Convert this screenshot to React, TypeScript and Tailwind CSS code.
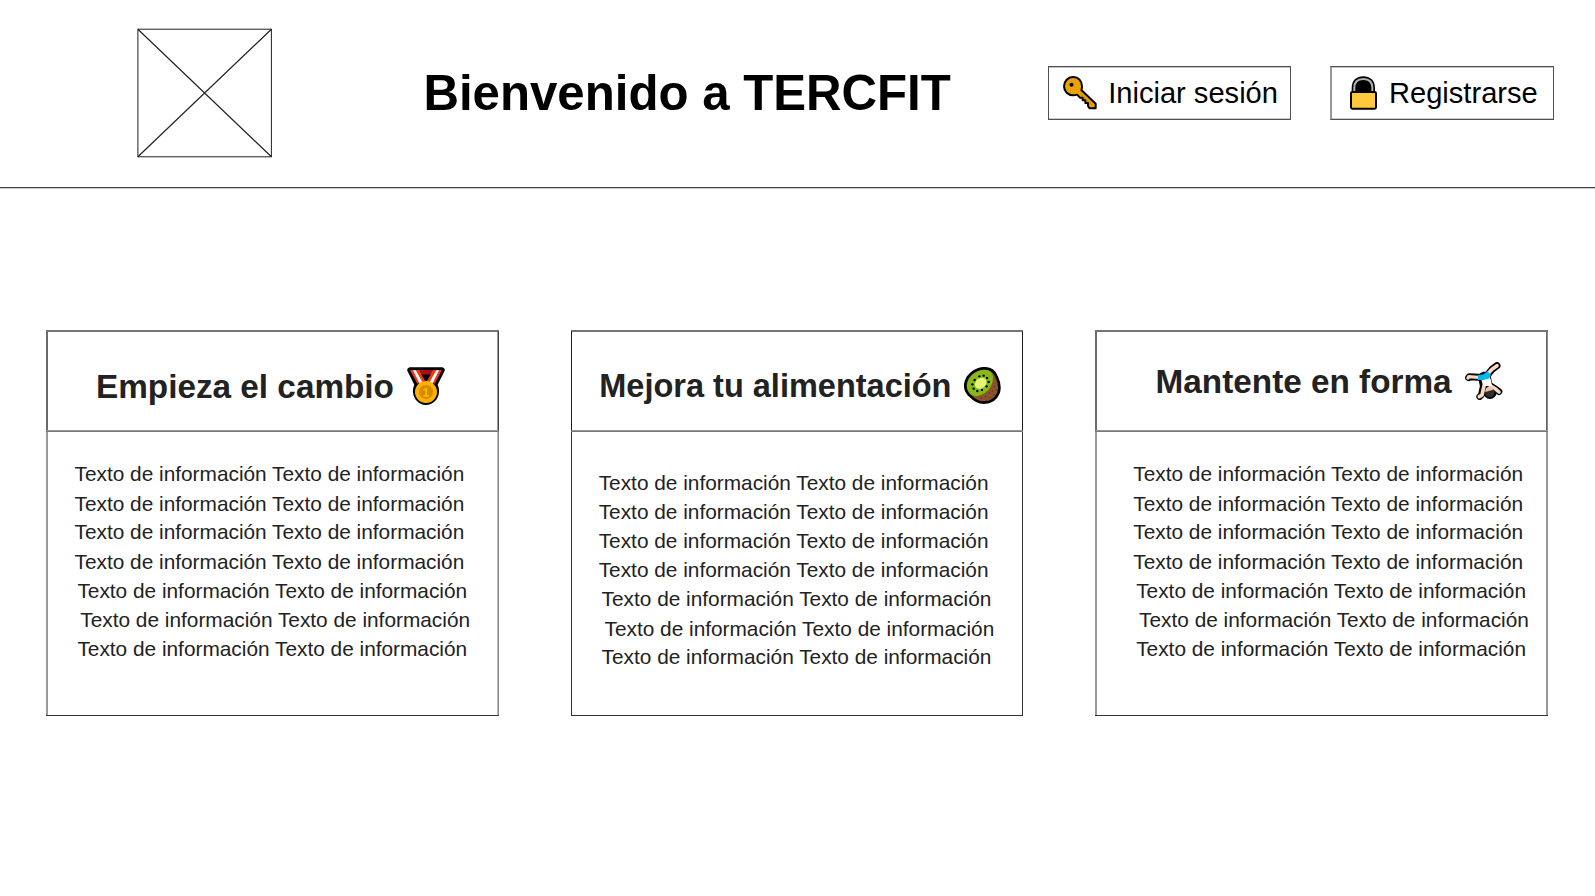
import type { ReactNode } from 'react';

const KeyIcon = () => (
  <svg viewBox="0 0 102 102" className="h-[34px] w-[34px] shrink-0">
    <path
      d="M31 3C15 3 3 16 3 31s12 27 28 27c4 0 8-1 11-2l9 9h8v8h8v8h8v9l5 7h18V83L55 42c2-3 2-7 2-11C57 15 46 3 31 3z"
      fill="#eaa300"
      stroke="#000"
      strokeWidth="6"
      strokeLinejoin="round"
    />
    <path d="M52 53l35 34" stroke="#c98200" strokeWidth="3" fill="none" />
    <circle cx="25.500" cy="26" r="6" fill="#000" />
  </svg>
);

const LockIcon = () => (
  <svg viewBox="0 0 81 102" className="h-[34px] w-[27px] shrink-0">
    <path d="M5 50V36C5 13 20 1 40 1s35 12 35 35v14z" fill="#000" />
    <path d="M13 48V36C13 18 24 9 40 9s27 9 27 27v12" fill="none" stroke="#b4b4b4" strokeWidth="6" />
    <rect x="3" y="48" width="75" height="50" rx="4" fill="#ffc83d" stroke="#000" strokeWidth="6" />
  </svg>
);

const MedalIcon = () => (
  <svg viewBox="0 0 114 114" className="h-[38px] w-[38px] shrink-0">
    <path d="M8 1h98q9 2 7 10L92 53q5 10 4 23C94 98 78 114 57 114S20 98 18 76q-1-13 4-23L1 11Q-1 3 8 1z" fill="#000" />
    <path d="M34 9h46l-9 14H44z" fill="#a80f1b" />
    <path d="M9 9h27l19 34-24 7z" fill="#f03a17" />
    <path d="M105 9H78L59 43l24 7z" fill="#f03a17" />
    <path d="M43 23h28L57 43z" fill="#000" />
    <path d="M18 10h8l20 35-8 5zM96 10h-8L68 45l8 5z" fill="#fff" />
    <circle cx="57" cy="75" r="33" fill="#ffb300" />
    <circle cx="57" cy="75" r="21" fill="#d38b00" />
    <path d="M49 67l7-4h4v21h6v5H49v-5h6V70l-6 2z" fill="#ffb300" />
  </svg>
);

const KiwiIcon = () => (
  <svg viewBox="0 0 111 111" className="h-[37px] w-[37px] shrink-0">
    <path
      d="M60 4C79 3 90 11 97 27c8 16 12 36 6 52-8 19-24 28-43 28-17 0-31-9-42-21C4 73 1 59 6 43 13 21 35 5 60 4z"
      fill="#8c5230"
      stroke="#000"
      strokeWidth="8"
    />
    <path d="M60 8c16-1 26 8 27 23 1 31-25 56-53 57C18 85 8 72 9 54 11 30 34 10 60 8z" fill="#86b817" />
    <ellipse cx="50" cy="49" rx="19" ry="15" transform="rotate(-42 50 49)" fill="#e3f475" />
    <g fill="#000">
      <circle cx="46" cy="28" r="3.600" />
      <circle cx="59" cy="26" r="3.600" />
      <circle cx="69" cy="33" r="3.600" />
      <circle cx="74" cy="45" r="3.600" />
      <circle cx="68" cy="58" r="3.600" />
      <circle cx="54" cy="69" r="3.600" />
      <circle cx="40" cy="72" r="3.600" />
      <circle cx="29" cy="65" r="3.600" />
      <circle cx="25" cy="52" r="3.600" />
      <circle cx="32" cy="39" r="3.600" />
    </g>
    <g fill="#5c321b">
      <circle cx="91" cy="59" r="2.200" />
      <circle cx="98" cy="69" r="2.200" />
      <circle cx="86" cy="72" r="2.200" />
      <circle cx="76" cy="79" r="2.200" />
      <circle cx="90" cy="83" r="2.200" />
      <circle cx="65" cy="89" r="2.200" />
      <circle cx="79" cy="92" r="2.200" />
      <circle cx="52" cy="94" r="2.200" />
      <circle cx="67" cy="100" r="2.200" />
    </g>
  </svg>
);

const CartwheelIcon = () => (
  <svg viewBox="0 0 114 114" className="h-[38px] w-[38px] shrink-0">
    <g fill="none" stroke="#000" strokeLinecap="round" strokeLinejoin="round">
      <path d="M11 47l2-3 28 2 24-4 16-20L96 11" strokeWidth="21" />
      <path d="M59 48l5 24" strokeWidth="38" />
      <path d="M55 72l-6 27-5 5" strokeWidth="20" />
      <path d="M74 70l18 11 10 8" strokeWidth="20" />
    </g>
    <circle cx="75" cy="91" r="20" fill="#000" />
    <g fill="none" stroke="#f9d8c8" strokeLinecap="round" strokeLinejoin="round">
      <path d="M9 48l2-4 30 2" strokeWidth="10" />
      <path d="M67 37l15-16 14-10" strokeWidth="11" />
      <path d="M57 72l-6 27-8 5" strokeWidth="11" />
      <path d="M76 71l17 11 9 8" strokeWidth="11" />
    </g>
    <path d="M48 48l24-7 6 14 3 17H54z" fill="#fff" />
    <path d="M39 40l17-3 11-10 11 12-7 11-17 4H39z" fill="#00b7f1" />
    <circle cx="74" cy="92" r="14" fill="#2f2f2f" />
    <path d="M61 90c-1-11 5-16 13-16 6 0 10 5 10 9z" fill="#eec3b1" />
  </svg>
);

const LINE = 'Texto de información Texto de información';
const INDENTS = ['pl-0', 'pl-0', 'pl-0', 'pl-0', 'pl-[2.9px]', 'pl-[5.8px]', 'pl-[2.9px]'];
const SIDE_ROWS = ['h-[30px]', 'h-[28px]', 'h-[30px]', 'h-[29px]', 'h-[29px]', 'h-[29px]', 'h-[29px]'];
const CENTER_ROWS = ['h-[29px]', 'h-[29px]', 'h-[29px]', 'h-[29px]', 'h-[30px]', 'h-[28px]', 'h-[29px]'];

interface CardProps {
  title: string;
  icon: ReactNode;
  frame: string;
  head: string;
  heading: string;
  iconOffset: string;
  body: string;
  rows: string[];
}

const Card = ({ title, icon, frame, head, heading, iconOffset, body, rows }: CardProps) => (
  <section className={`flex h-[386px] shrink-0 flex-col border-b border-b-[#333] ${frame}`}>
    <header className="border-y border-t-[#747474] border-b-[#777]">
      <div className={`flex h-[100px] items-start border-y border-t-[#747474] border-b-[#999] ${head}`}>
        <h2 className={`leading-[40px] font-bold whitespace-nowrap ${heading}`}>{title}</h2>
        <span className={iconOffset}>{icon}</span>
      </div>
    </header>
    <div className={`grow text-[20.83px] leading-[29px] whitespace-nowrap ${body}`}>
      {rows.map((row, i) => (
        <p key={i} className={`${row} ${INDENTS[i]}`}>
          {LINE}
        </p>
      ))}
    </div>
  </section>
);

export default function App() {
  return (
    <div className="h-[896px] w-[1595px] overflow-hidden bg-white font-['Liberation_Sans',Arial,sans-serif] text-[#222]">
      <header className="flex h-[188px] items-center border-b border-[#444] pb-px text-black shadow-[0_1px_#ccc]">
        <svg viewBox="0 0 136 130" className="ml-[137px] h-[130px] w-[136px] shrink-0" fill="none" stroke="#222">
          <rect x="0.900" y="1.200" width="133.500" height="127.600" strokeWidth="1" />
          <path d="M0.900 1.200L134.400 128.800M134.400 1.200L0.900 128.800" strokeWidth="1.200" />
        </svg>
        <h1 className="ml-[150.400px] w-[624.600px] shrink-0 text-[49.2px] leading-[56px] font-bold whitespace-nowrap">
          Bienvenido a TERCFIT
        </h1>
        <button className="flex h-[54px] w-[243px] shrink-0 items-center border border-[#505050] pl-[14px] text-[29.1px] leading-[34px] whitespace-nowrap shadow-[inset_0_1px_#c4c4c4,inset_0_-1px_#ccc]">
          <KeyIcon />
          <span className="ml-[11.200px]">Iniciar sesión</span>
        </button>
        <button className="ml-[39px] flex h-[54px] w-[224px] shrink-0 items-center border border-[#505050] border-l-[#999] pl-[19px] text-[29.1px] leading-[34px] whitespace-nowrap shadow-[inset_1px_0_#999,inset_0_1px_#c4c4c4,inset_0_-1px_#ccc]">
          <LockIcon />
          <span className="ml-[12px]">Registrarse</span>
        </button>
      </header>

      <main className="flex gap-[72px] pt-[142px] pl-[46px]">
        <Card
          title="Empieza el cambio"
          icon={<MedalIcon />}
          frame="w-[453px]"
          head="border-x border-l-[#6a6a6a] border-r-[#444] shadow-[inset_1px_0_#6a6a6a,inset_-1px_0_#999] pl-[49px]"
          heading="mt-[35px] w-[311px] text-[33.3px]"
          iconOffset="mt-[35px]"
          body="border-x border-l-[#999] border-r-[#888] shadow-[inset_1px_0_#999,inset_-1px_0_#bbb] pt-[27px] pl-[27.500px]"
          rows={SIDE_ROWS}
        />
        <Card
          title="Mejora tu alimentación"
          icon={<KiwiIcon />}
          frame="w-[452px]"
          head="border-x border-x-[#1c1c1c] pl-[27.300px]"
          heading="mt-[34px] w-[364.700px] text-[32.5px]"
          iconOffset="mt-[35px]"
          body="border-x border-x-[#333] pt-[36px] pl-[26.700px]"
          rows={CENTER_ROWS}
        />
        <Card
          title="Mantente en forma"
          icon={<CartwheelIcon />}
          frame="w-[453px]"
          head="border-x border-l-[#6a6a6a] border-r-[#888] shadow-[inset_1px_0_#6a6a6a,inset_-1px_0_#666] pl-[59.600px]"
          heading="mt-[30px] w-[309.400px] text-[33.3px]"
          iconOffset="mt-[30px]"
          body="border-x border-x-[#999] shadow-[inset_1px_0_#999,inset_-1px_0_#999] pt-[27px] pl-[37.300px]"
          rows={SIDE_ROWS}
        />
      </main>
    </div>
  );
}
